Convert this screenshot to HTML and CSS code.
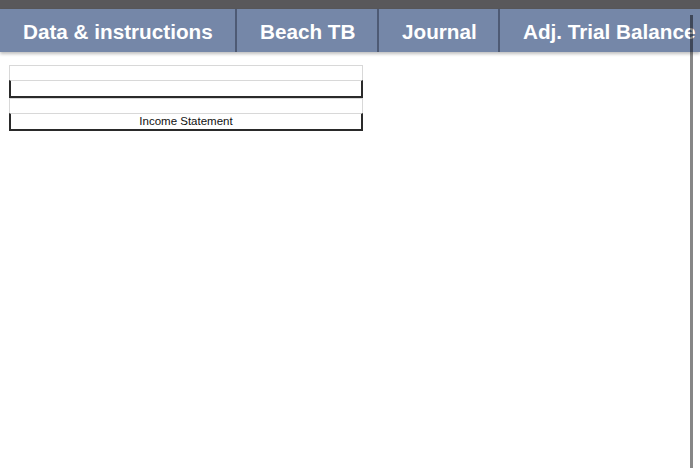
FILE: index.html
```html
<!DOCTYPE html>
<html>
<head>
<meta charset="utf-8">
<link rel="stylesheet" href="styles.css">
</head>
<body>
<div class="topbar"></div>
<div class="tabs">
  <div class="tab t1">Data &amp; instructions</div>
  <div class="tab t2">Beach TB</div>
  <div class="tab t3">Journal</div>
  <div class="tab t4">Adj. Trial Balance</div>
</div>
<div class="sheet">
  <div class="row light"></div>
  <div class="row dark"></div>
  <div class="row light"></div>
  <div class="row dark title">Income Statement</div>
</div>
<div class="scrollline"></div>
</body>
</html>
```
FILE: styles.css
```css
html, body {
  margin: 0;
  padding: 0;
  background: #ffffff;
  font-family: "Liberation Sans", Arial, sans-serif;
  overflow: hidden;
  width: 700px;
  height: 474px;
}
.topbar {
  height: 9px;
  background: #59585b;
}
.tabs {
  display: flex;
  height: 43px;
  box-shadow: 0 2px 3px rgba(0,0,0,0.25);
  background: #7486a7;
  overflow: hidden;
  white-space: nowrap;
}
.tab {
  flex: none;
  box-sizing: border-box;
  height: 43px;
  line-height: 45px;
  color: #ffffff;
  font-weight: bold;
  font-size: 20.7px;
  background: #7587a8;
  border-right: 2px solid #4e5a74;
  padding-left: 23px;
}
.t1 { width: 237px; }
.t2 { width: 142px; }
.t3 { width: 121px; }
.t4 { flex: 1; border-right: none; }
.sheet {
  margin: 13px 0 0 9px;
  width: 354px;
}
.row {
  box-sizing: border-box;
  width: 354px;
}
.row.light {
  height: 15px;
  border: 1px solid #d8d8d8;
  border-bottom: none;
}
.row.dark {
  height: 18px;
  border: 1px solid #d8d8d8;
  border-left: 2px solid #2a2a2a;
  border-right: 2px solid #2a2a2a;
  border-bottom: 2px solid #2a2a2a;
}
.row.title {
  font-size: 11.5px;
  line-height: 15px;
  text-align: center;
  color: #111111;
}
.scrollline {
  position: absolute;
  left: 690px;
  top: 15px;
  width: 3px;
  height: 453px;
  background: rgba(0,0,0,0.47);
}
```
